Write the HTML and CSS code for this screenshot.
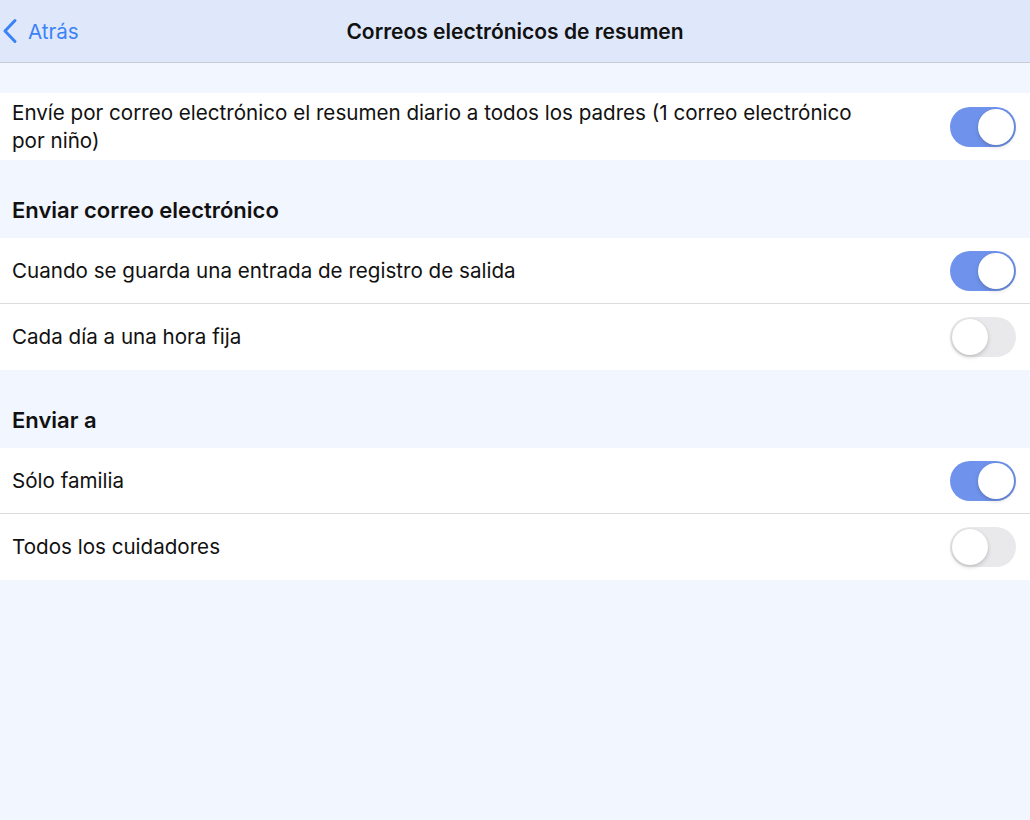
FILE: index.html
```html
<!DOCTYPE html>
<html lang="es">
<head>
<meta charset="utf-8">
<link rel="stylesheet" href="styles.css">
</head>
<body>
<header class="nav">
  <a class="back">
    <svg class="chev" width="16" height="26" viewBox="0 0 16 26"><path d="M13 2.5 L3 13 L13 23.5" fill="none" stroke="#3b82f6" stroke-width="3" stroke-linecap="round" stroke-linejoin="round"/></svg>
    <span>Atrás</span>
  </a>
  <h1 class="title">Correos electrónicos de resumen</h1>
</header>
<main class="content">
  <div class="spacer"></div>
  <section class="group">
    <div class="row tall">
      <span class="label">Envíe por correo electrónico el resumen diario a todos los padres (1 correo electrónico por niño)</span>
      <span class="switch on"><span class="knob"></span></span>
    </div>
  </section>
  <h2 class="section-head">Enviar correo electrónico</h2>
  <section class="group">
    <div class="row">
      <span class="label">Cuando se guarda una entrada de registro de salida</span>
      <span class="switch on"><span class="knob"></span></span>
    </div>
    <div class="row">
      <span class="label">Cada día a una hora fija</span>
      <span class="switch"><span class="knob"></span></span>
    </div>
  </section>
  <h2 class="section-head">Enviar a</h2>
  <section class="group">
    <div class="row">
      <span class="label">Sólo familia</span>
      <span class="switch on"><span class="knob"></span></span>
    </div>
    <div class="row">
      <span class="label">Todos los cuidadores</span>
      <span class="switch"><span class="knob"></span></span>
    </div>
  </section>
</main>
</body>
</html>
```
FILE: styles.css
```css
* { box-sizing: border-box; }
html, body { margin: 0; padding: 0; }
body {
  width: 1030px;
  height: 820px;
  background: #f2f6fe;
  font-family: Inter, "Liberation Sans", sans-serif;
  color: #111;
  overflow: hidden;
}
.nav {
  height: 63px;
  background: #dfe8fb;
  border-bottom: 1px solid #c9ccd3;
  display: flex;
  align-items: center;
  justify-content: center;
  position: relative;
}
.back {
  position: absolute;
  left: 2px;
  top: 0;
  height: 62px;
  display: flex;
  align-items: center;
  gap: 10px;
  color: #3b82f6;
  font-size: 20.6px;
}
.title {
  margin: 0;
  font-size: 21px;
  font-weight: 600;
  color: #111;
}
.spacer { height: 30px; }
.group { background: #fff; }
.row {
  display: flex;
  align-items: center;
  justify-content: space-between;
  height: 66px;
  padding: 0 14px 0 12px;
  border-bottom: 1px solid #dcdcdf;
}
.row:last-child { border-bottom: none; height: 66px; }
.row.tall { height: 67px; }
.label {
  font-size: 20.6px;
  line-height: 28px;
  max-width: 850px;
}
.section-head {
  margin: 0;
  height: 78px;
  padding: 0 12px 15px;
  display: flex;
  align-items: flex-end;
  font-size: 22px;
  font-weight: 600;
}
.switch {
  flex: none;
  width: 66px;
  height: 40px;
  border-radius: 20px;
  background: #e9e9eb;
  display: flex;
  align-items: center;
  padding: 2px;
}
.switch.on { background: #6f93ec; justify-content: flex-end; }
.knob {
  width: 36px;
  height: 36px;
  border-radius: 50%;
  background: #fff;
  box-shadow: 0 2px 4px rgba(0,0,0,0.18), 0 0 1px rgba(0,0,0,0.1);
}
```
